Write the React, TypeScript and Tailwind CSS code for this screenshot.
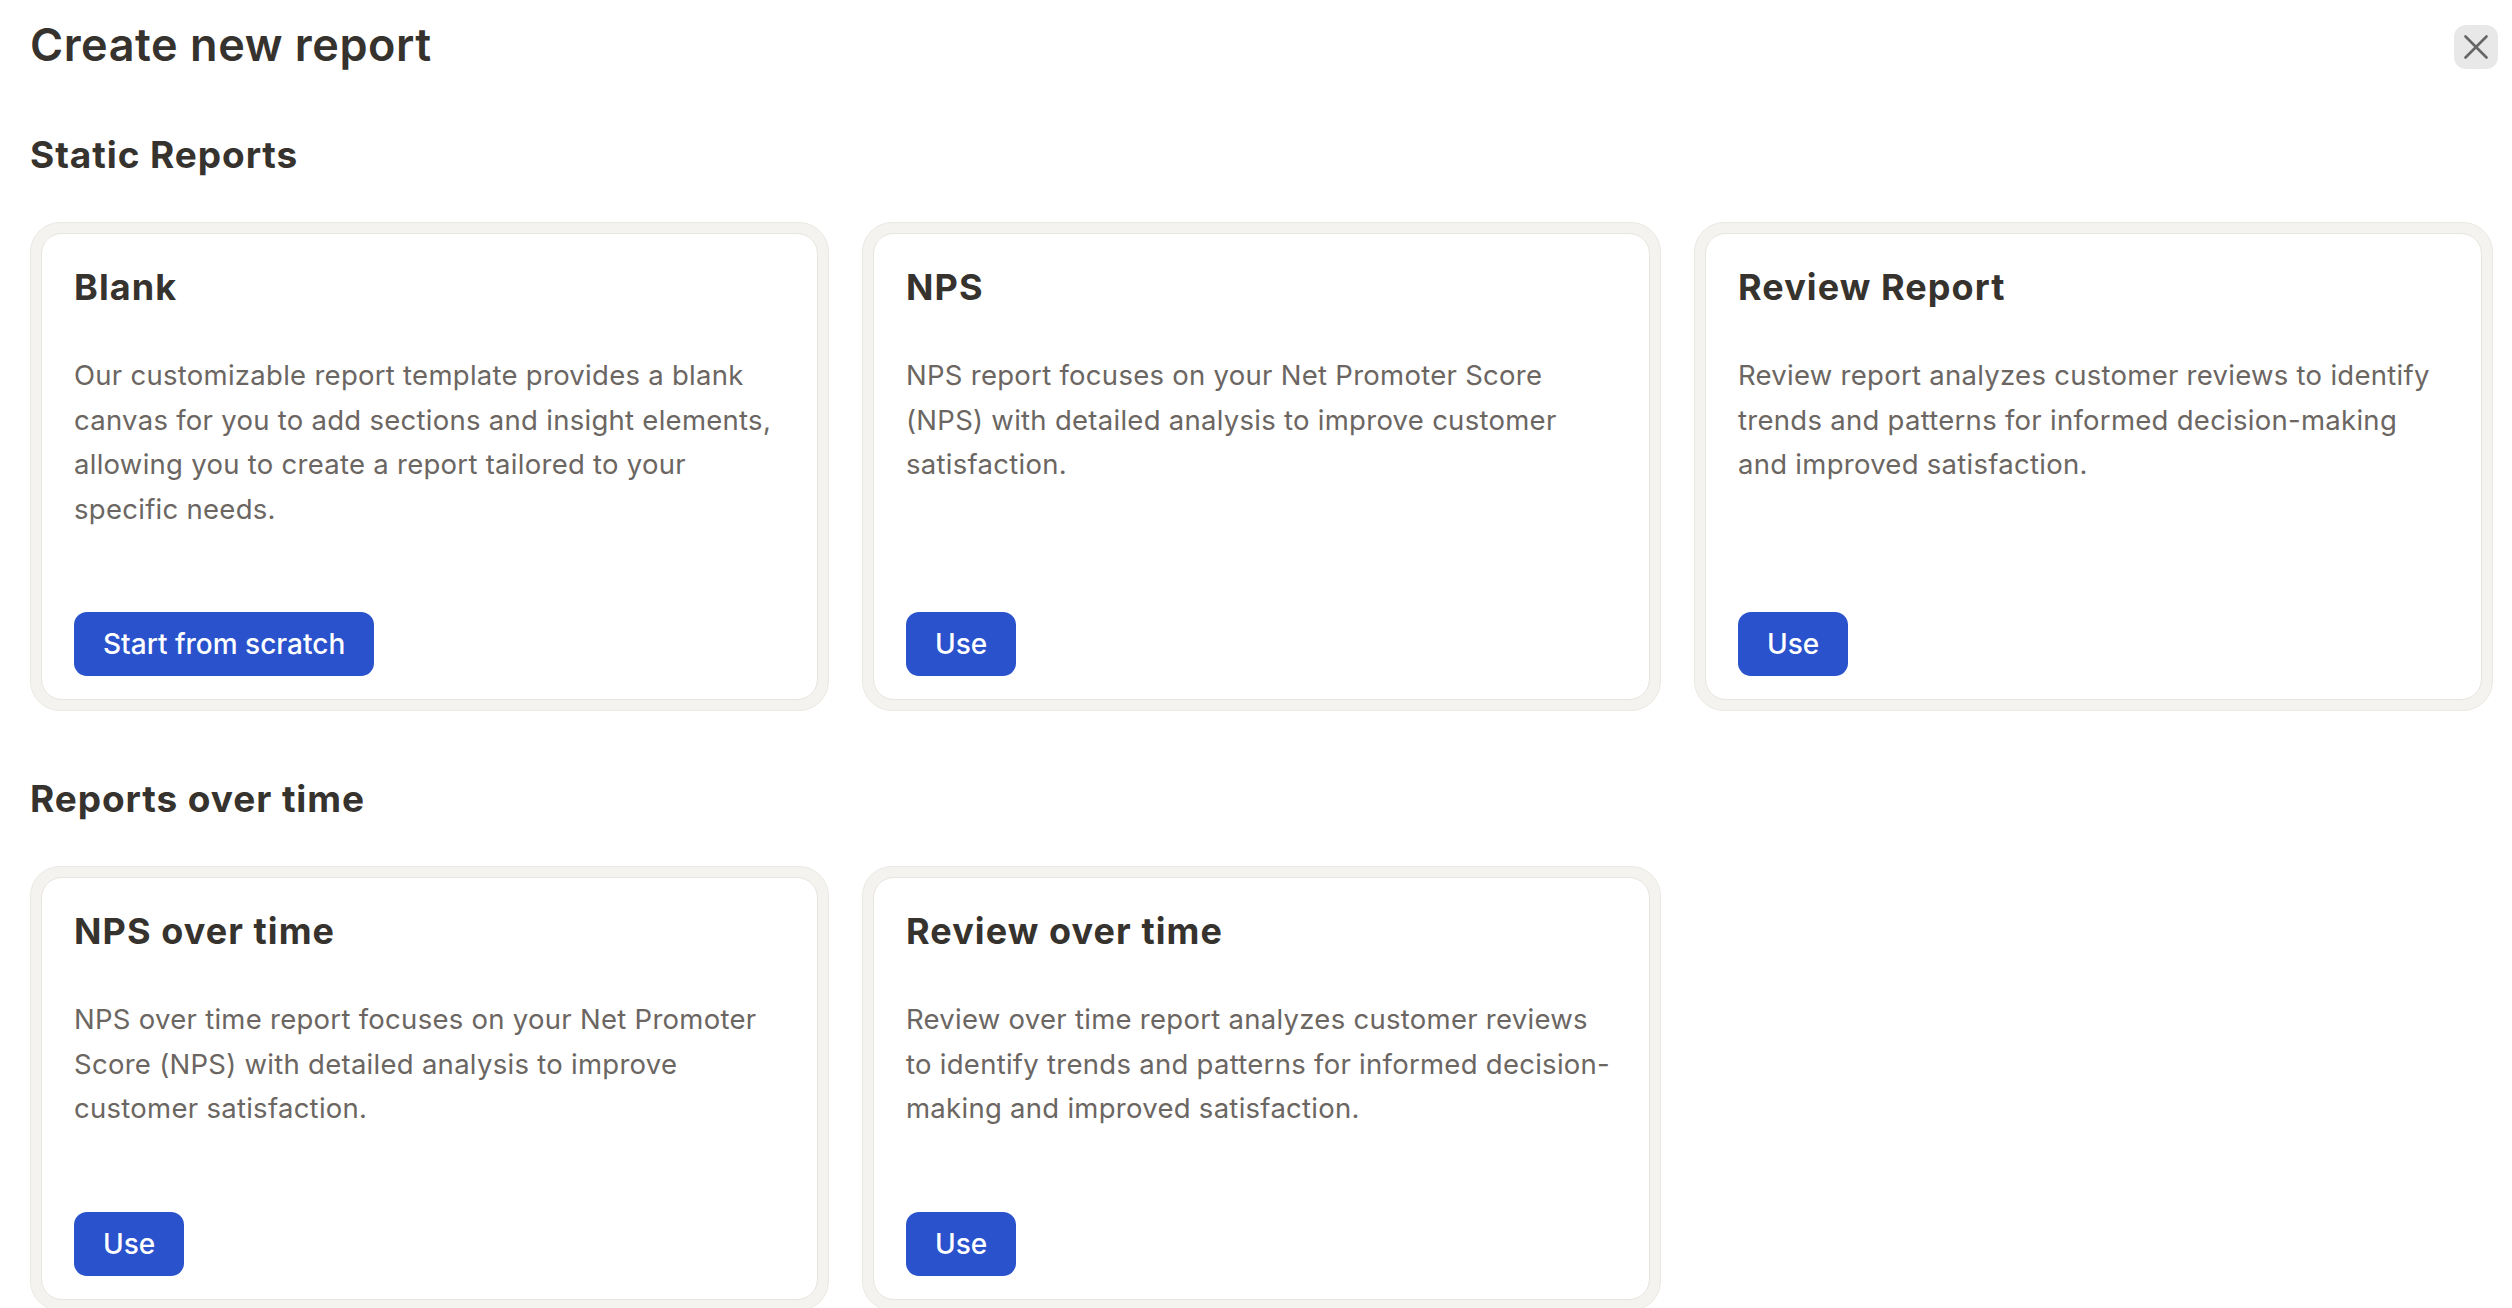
import React from 'react';

interface ReportTemplate {
    title: string;
    description: string;
    action: string;
}

const staticReports: ReportTemplate[] = [
    {
        title: 'Blank',
        description:
            'Our customizable report template provides a blank canvas for you to add sections and insight elements, allowing you to create a report tailored to your specific needs.',
        action: 'Start from scratch',
    },
    {
        title: 'NPS',
        description:
            'NPS report focuses on your Net Promoter Score (NPS) with detailed analysis to improve customer satisfaction.',
        action: 'Use',
    },
    {
        title: 'Review Report',
        description:
            'Review report analyzes customer reviews to identify trends and patterns for informed decision-making and improved satisfaction.',
        action: 'Use',
    },
];

const reportsOverTime: ReportTemplate[] = [
    {
        title: 'NPS over time',
        description:
            'NPS over time report focuses on your Net Promoter Score (NPS) with detailed analysis to improve customer satisfaction.',
        action: 'Use',
    },
    {
        title: 'Review over time',
        description:
            'Review over time report analyzes customer reviews to identify trends and patterns for informed decision-making and improved satisfaction.',
        action: 'Use',
    },
];

const ReportCard: React.FC<ReportTemplate> = ({ title, description, action }) => (
    <div className="rounded-[30px] border border-[#ebe8e3] bg-[#f5f3f0] p-[10px]">
        <div className="flex h-full flex-col rounded-[21px] border border-[#e8e5e0] bg-white px-[32px] pt-[32px] pb-[23px]">
            <h3 className="text-[36px] leading-[43px] font-bold tracking-[0.03em] text-[#36322d]">{title}</h3>
            <p className="mt-[44px] text-[27.5px] leading-[44.5px] tracking-[0.01em] text-[#6b6662]">{description}</p>
            <div className="mt-auto pt-[81px]">
                <button className="h-[64px] rounded-[13px] bg-[#2952cc] px-[29px] text-[28px] font-medium text-white">
                    {action}
                </button>
            </div>
        </div>
    </div>
);

const Section: React.FC<{ heading: string; items: ReportTemplate[] }> = ({ heading, items }) => (
    <section>
        <h2 className="text-[37px] leading-[44px] font-bold tracking-[0.025em] text-[#36322d]">{heading}</h2>
        <div className="mt-[45px] grid grid-cols-3 gap-[33px]">
            {items.map((item) => (
                <ReportCard key={item.title} {...item} />
            ))}
        </div>
    </section>
);

export default function App() {
    return (
        <div className="min-h-screen bg-white pt-[18px] pr-[19px] pl-[30px] font-['Inter','Noto_Sans',sans-serif]">
            <div className="flex items-start justify-between">
                <h1 className="text-[45px] leading-[54px] font-semibold tracking-[0.012em] text-[#36322d]">
                    Create new report
                </h1>
                <button className="mt-[7px] -mr-[5px] flex h-[44px] w-[44px] items-center justify-center rounded-[12px] bg-[#e8e8e8]">
                    <svg width="24" height="24" viewBox="0 0 24 24" fill="none" stroke="#666666" strokeWidth="2.6" strokeLinecap="round">
                        <path d="M1.5 1.5 22.5 22.5" />
                        <path d="M22.5 1.5 1.5 22.5" />
                    </svg>
                </button>
            </div>

            <div className="mt-[61px]">
                <Section heading="Static Reports" items={staticReports} />
            </div>
            <div className="mt-[66px]">
                <Section heading="Reports over time" items={reportsOverTime} />
            </div>
        </div>
    );
}
